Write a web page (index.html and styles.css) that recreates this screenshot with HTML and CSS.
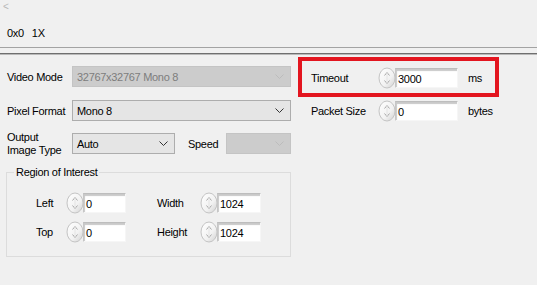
FILE: index.html
```html
<!DOCTYPE html>
<html>
<head>
    <meta charset="UTF-8">
    <title>Camera Settings</title>
    <link rel="stylesheet" href="styles.css">
</head>
<body>
    <div class="toolbar">
        <div class="back">&lt;</div>
        <div class="zoom"><span>0x0</span><span>1X</span></div>
    </div>
    <div class="rule"></div>

    <div class="settings">
        <div class="left">
            <div class="row first">
                <div class="label">Video Mode</div>
                <div class="combo disabled mode">
                    <span>32767x32767 Mono 8</span>
                    <svg class="chev" width="9" height="5" viewBox="0 0 9 5"><path d="M0.5 0.5 L4.5 4.5 L8.5 0.5" fill="none" stroke="currentColor"/></svg>
                </div>
            </div>
            <div class="row second">
                <div class="label">Pixel Format</div>
                <div class="combo mode">
                    <span>Mono 8</span>
                    <svg class="chev" width="9" height="5" viewBox="0 0 9 5"><path d="M0.5 0.5 L4.5 4.5 L8.5 0.5" fill="none" stroke="currentColor"/></svg>
                </div>
            </div>
            <div class="row third">
                <div class="label two-line">Output<br>Image Type</div>
                <div class="combo output">
                    <span>Auto</span>
                    <svg class="chev" width="9" height="5" viewBox="0 0 9 5"><path d="M0.5 0.5 L4.5 4.5 L8.5 0.5" fill="none" stroke="currentColor"/></svg>
                </div>
                <div class="label speed-label">Speed</div>
                <div class="combo disabled speed">
                    <span></span>
                    <svg class="chev" width="9" height="5" viewBox="0 0 9 5"><path d="M0.5 0.5 L4.5 4.5 L8.5 0.5" fill="none" stroke="currentColor"/></svg>
                </div>
            </div>

            <fieldset class="roi">
                <legend>Region of Interest</legend>
                <div class="roi-grid">
                    <div class="roi-label">Left</div>
                    <div class="numeric">
                        <svg class="spin" width="18" height="22" viewBox="0 0 18 22"><use href="#spinner"/></svg>
                        <div class="field">0</div>
                    </div>
                    <div class="roi-label second-col">Width</div>
                    <div class="numeric">
                        <svg class="spin" width="18" height="22" viewBox="0 0 18 22"><use href="#spinner"/></svg>
                        <div class="field">1024</div>
                    </div>
                    <div class="roi-label">Top</div>
                    <div class="numeric">
                        <svg class="spin" width="18" height="22" viewBox="0 0 18 22"><use href="#spinner"/></svg>
                        <div class="field">0</div>
                    </div>
                    <div class="roi-label second-col">Height</div>
                    <div class="numeric">
                        <svg class="spin" width="18" height="22" viewBox="0 0 18 22"><use href="#spinner"/></svg>
                        <div class="field">1024</div>
                    </div>
                </div>
            </fieldset>
        </div>

        <div class="right">
            <div class="highlight">
                <div class="num-row">
                    <div class="num-label">Timeout</div>
                    <div class="numeric">
                        <svg class="spin" width="18" height="22" viewBox="0 0 18 22"><use href="#spinner"/></svg>
                        <div class="field">3000</div>
                    </div>
                    <div class="unit">ms</div>
                </div>
            </div>
            <div class="num-row packet">
                <div class="num-label">Packet Size</div>
                <div class="numeric">
                    <svg class="spin" width="18" height="22" viewBox="0 0 18 22"><use href="#spinner"/></svg>
                    <div class="field">0</div>
                </div>
                <div class="unit">bytes</div>
            </div>
        </div>
    </div>

    <!-- increment / decrement knob shared by all numeric fields -->
    <svg class="defs" width="0" height="0">
        <defs>
            <linearGradient id="knob" x1="0" y1="0" x2="1" y2="1">
                <stop offset="0" stop-color="#ffffff"/>
                <stop offset="0.6" stop-color="#f2f2f2"/>
                <stop offset="1" stop-color="#cfcfcf"/>
            </linearGradient>
            <g id="spinner">
                <ellipse cx="9" cy="11" rx="8" ry="10" fill="url(#knob)" stroke="#c4c4c4"/>
                <path d="M6.5 8.5 L9 5.5 L11.5 8.5" fill="none" stroke="#a8a8a8"/>
                <path d="M6.5 13.5 L9 16.5 L11.5 13.5" fill="none" stroke="#a8a8a8"/>
                <path d="M9 6 L9 16" stroke="#e4e4e4"/>
            </g>
        </defs>
    </svg>
</body>
</html>
```

FILE: styles.css
```css
body {
    margin: 0;
    background: #f0f0f0;
    font-family: "Liberation Sans", Arial, sans-serif;
    font-size: 11px;
    letter-spacing: -0.3px;
    color: #000;
}
.toolbar {
    height: 47px;
    padding: 0 7px;
    box-sizing: border-box;
}
.back {
    margin-left: -4px;
    height: 14px;
    line-height: 14px;
    font-size: 10px;
    color: #b8b8b8;
}
.zoom {
    margin-top: 12px;
    line-height: 14px;
    display: flex;
    gap: 8px;
}
.rule {
    height: 5px;
    border-top: 1px solid #a3a3a3;
    border-bottom: 1px solid #6f6f6f;
    box-shadow: 0 1px 0 #b9b9b9;
}
.settings {
    display: flex;
    padding-left: 7px;
}
.left {
    width: 284px;
}
.row {
    display: flex;
    align-items: center;
    height: 21px;
}
.row.first {
    margin-top: 12px;
}
.row.second {
    margin-top: 13px;
}
.row.third {
    margin-top: 12px;
}
.label {
    width: 65px;
    flex: none;
}
.two-line {
    line-height: 13px;
}
.combo {
    height: 21px;
    box-sizing: border-box;
    display: flex;
    align-items: center;
    justify-content: space-between;
    padding: 0 6px 0 4px;
    border: 1px solid #adadad;
    background: #e5e5e5;
    color: #000;
}
.combo .chev {
    color: #333;
}
.combo.disabled {
    background: #cccccc;
    border-color: #c4c4c4;
    color: #7d7d7d;
}
.combo.disabled .chev {
    color: #bcbcbc;
}
.mode {
    width: 219px;
}
.output {
    width: 103px;
}
.speed-label {
    flex: 1;
    margin-left: 13px;
}
.speed {
    width: 65px;
}
.roi {
    margin: 12px 0 0 -1px;
    padding: 14px 0 14px 29px;
    border: 1px solid #dcdcdc;
    width: 285px;
    box-sizing: border-box;
}
.roi legend {
    margin-left: -22px;
    padding: 0 2px;
    line-height: 13px;
}
.roi-grid {
    display: grid;
    grid-template-columns: 30px 60px 74px 61px;
    grid-auto-rows: 20px;
    row-gap: 9px;
    align-items: center;
}
.second-col {
    padding-left: 31px;
}
.numeric {
    display: flex;
    align-items: center;
    height: 20px;
}
.spin {
    flex: none;
    margin-right: -1px;
}
.field {
    flex: 1;
    height: 20px;
    box-sizing: border-box;
    padding: 3px 0 0 2px;
    line-height: 14px;
    background: #fff;
    border: 1px solid;
    border-color: #bdbdbd #f6f6f6 #f6f6f6 #c6c6c6;
    box-shadow: inset 1px 2px 1px #c9c9c9;
}
.right {
    margin-left: 7px;
}
.highlight {
    margin-top: 3px;
    width: 201px;
    height: 40px;
    box-sizing: border-box;
    border: 4px solid #e3151f;
    padding: 7px 0 0 9px;
}
.num-row {
    display: flex;
    align-items: center;
    height: 20px;
}
.num-label {
    width: 67px;
}
.num-row .numeric {
    width: 80px;
}
.unit {
    margin-left: 10px;
}
.packet {
    margin-top: 4px;
    padding-left: 13px;
}
.defs {
    position: absolute;
}
```
